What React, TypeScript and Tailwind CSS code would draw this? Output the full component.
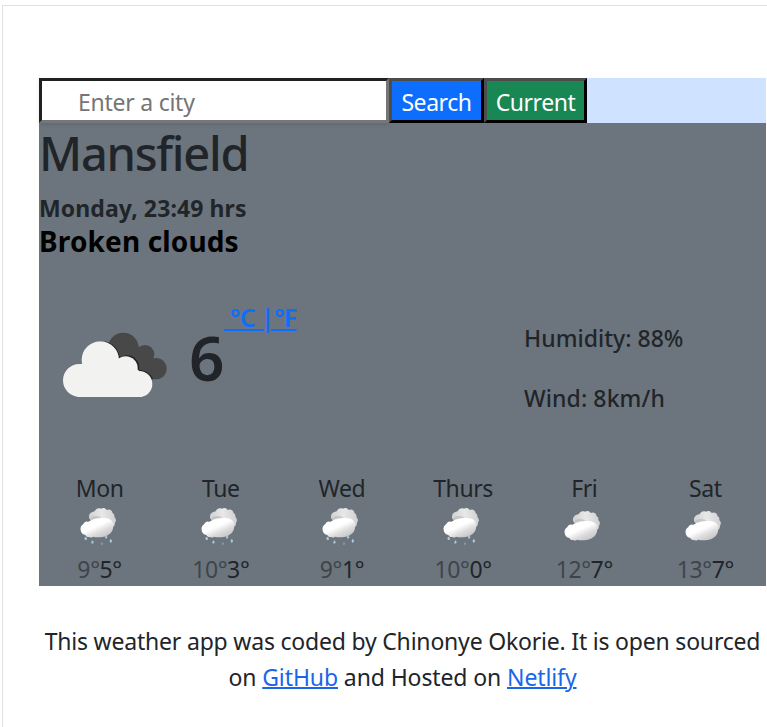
import React from "react";

type Day = { name: string; max: number; min: number; rain: boolean };

const days: Day[] = [
  { name: "Mon", max: 9, min: 5, rain: true },
  { name: "Tue", max: 10, min: 3, rain: true },
  { name: "Wed", max: 9, min: 1, rain: true },
  { name: "Thurs", max: 10, min: 0, rain: true },
  { name: "Fri", max: 12, min: 7, rain: false },
  { name: "Sat", max: 13, min: 7, rain: false },
];

function BrokenClouds() {
  return (
    <svg className="h-[70px] w-[110px] shrink-0" viewBox="60 120 330 210">
      <g fill="#484849">
        <circle cx="250" cy="174" r="46" />
        <circle cx="315" cy="193" r="28" />
        <circle cx="348" cy="236" r="32" />
        <path d="M230 170h80l30 98H250z" />
      </g>
      <g fill="#202225">
        <circle cx="184" cy="209" r="56" />
        <circle cx="261" cy="233" r="37" />
        <path d="M290 240c25-2 42 10 49 27l-20 10z" />
      </g>
      <g fill="#f2f2f0">
        <circle cx="118" cy="271" r="49" />
        <circle cx="181" cy="210" r="56" />
        <circle cx="257" cy="235" r="36" />
        <circle cx="298" cy="282" r="39" />
        <path d="M118 222h60l80-10 40 31v77H118z" />
        <rect x="108" y="270" width="202" height="51" rx="8" />
      </g>
    </svg>
  );
}

function DayIcon({ rain, id }: { rain: boolean; id: string }) {
  return (
    <svg className="h-[50px] w-[50px]" viewBox="0 0 150 150">
      <defs>
        <linearGradient id={"front" + id} x1="0.2" y1="0.1" x2="0.85" y2="0.95">
          <stop offset="0.4" stopColor="#fff" />
          <stop offset="0.68" stopColor="#dcdcdc" />
          <stop offset="1" stopColor="#c2c2c2" />
        </linearGradient>
        <linearGradient id={"back" + id} x1="0" y1="0.6" x2="1" y2="0.5">
          <stop offset="0" stopColor="#d0d0d0" />
          <stop offset="0.5" stopColor="#e8e8e8" />
          <stop offset="1" stopColor="#d0d0d0" />
        </linearGradient>
      </defs>
      <g transform={rain ? "translate(2 0)" : "translate(2 9)"}>
        <path
          fill={"url(#back" + id + ")"}
          d="M41 56c-4-12 3-20 16-22 2-7 10-12 19-8 6-3 13-2 17 4 8-4 17 0 18 10 5 3 6 6 5 11 6 6 6 12 2 17 0 9-4 14-12 13L60 72z"
        />
        <path fill="#bdbdbd" opacity="0.7" d="M43 55c5-7 14-8 20-7 7 0 13 3 15 7-11-2-20-1-28 5z" />
        <path
          fill={"url(#front" + id + ")"}
          d="M37 66c12-8 24-9 35-11 20-3 34 1 39 12 5 19-2 33-17 40-15 6-31 6-42 3-3 3-7 4-11 1-6 1-10-2-12-6-7 0-13-6-14-14-2-9 2-15 8-19 3-6 9-9 14-6z"
        />
      </g>
      {rain && (
        <g fill="#a9cbdd">
          <path d="M31 110l5 4-1 6h-5l-2-5z" />
          <path d="M52 121l4 4-1 5-5 1-1-5z" />
          <path d="M92 106l5 4-1 5-5 1-1-5z" />
          <path d="M106 117l5 4-1 6-5 1-1-6z" />
          <path d="M80 126l4 4-2 5-4-1z" opacity="0.5" />
        </g>
      )}
    </svg>
  );
}

export default function App() {
  return (
    <div className="h-[727px] w-[767px] overflow-hidden bg-white pl-[2px] pt-[5px] font-['Noto_Sans','Open_Sans',sans-serif] text-[#212529]">
      <main className="h-[722px] border-l border-t border-[#dedfe1] pl-9 pt-[72px]">
        <div className="w-[727px] bg-[#6c757d]">
          <form className="flex h-[45px] bg-[#cfe2ff]">
            <input
              placeholder="Enter a city"
              className="h-[45px] w-[350px] border-[3px] border-b-[#767676] border-l-[#212121] border-r-[#767676] border-t-[#212121] bg-white pb-0 pl-9 pt-[3px] text-[23px] tracking-[-0.25px] shadow-[0_2px_4px_rgba(0,0,0,0.1)] outline-none placeholder:text-[#757575]"
            />
            <button
              type="button"
              className="h-[45px] w-[95px] border-[3px] border-b-black border-l-[#4c4c4c] border-r-black border-t-[#4c4c4c] bg-[#0d6efd] pt-[3px] text-[23px] tracking-[-0.45px] text-white"
            >
              Search
            </button>
            <button
              type="button"
              className="h-[45px] w-[103px] border-[3px] border-b-black border-l-[#4c4c4c] border-r-black border-t-[#4c4c4c] bg-[#198754] pt-[3px] text-[23px] tracking-[-0.45px] text-white"
            >
              Current
            </button>
          </form>
          <h1 className="h-[68px] whitespace-nowrap text-[47px] font-medium leading-[60px] tracking-[-1.25px]">Mansfield</h1>
          <p className="h-[34px] whitespace-nowrap text-[23px] font-bold leading-[34px] tracking-[0.1px]">Monday, 23:49 hrs</p>
          <p className="h-[35px] whitespace-nowrap text-[28px] font-bold leading-[32px] tracking-[0.15px] text-black">Broken clouds</p>
          <div className="flex h-[209px] pl-[21px]">
            <div className="pt-[70px]">
              <BrokenClouds />
            </div>
            <span className="w-[33px] pl-[19px] pt-[52px] text-[62px] font-semibold leading-[90px]">6</span>
            <a className="ml-[21px] w-[80px] whitespace-pre pt-[39px] text-[25px] font-semibold leading-[36px] tracking-[-0.7px] text-[#0d6efd] underline">
              {" °C |°F"}
            </a>
            <div className="ml-[220px] whitespace-nowrap pt-[60px] text-[23px] font-medium leading-[36px] tracking-[0.02px]">
              <p>Humidity: 88%</p>
              <p className="mt-6 tracking-[0.1px]">Wind: 8km/h</p>
            </div>
          </div>
          <div className="grid h-[117px] grid-cols-6 text-center text-[23px] tracking-[-0.4px]">
            {days.map((day) => (
              <div key={day.name} className="flex flex-col items-center">
                <div className="h-[31px] leading-[38px]">{day.name}</div>
                <DayIcon rain={day.rain} id={day.name} />
                <div className="h-[36px] leading-[38px]">
                  <span className="opacity-60">{day.max}°</span>
                  <span>{day.min}°</span>
                </div>
              </div>
            ))}
          </div>
        </div>
        <footer className="w-[727px] whitespace-nowrap pt-[37px] text-center text-[23px] leading-[36px] tracking-[-0.2px]">
          <p>This weather app was coded by Chinonye Okorie. It is open sourced</p>
          <p className="tracking-[-0.11px]">
            on <a className="text-[#1a66e8] underline decoration-2">GitHub</a> and Hosted on{" "}
            <a className="text-[#1a66e8] underline decoration-2">Netlify</a>
          </p>
        </footer>
      </main>
    </div>
  );
}
